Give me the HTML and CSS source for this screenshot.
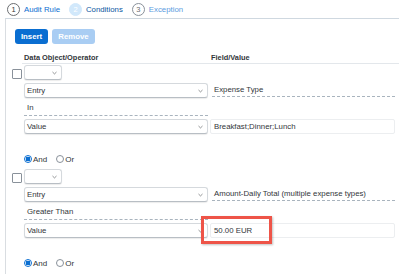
FILE: index.html
```html
<!DOCTYPE html>
<html>
<head>
<meta charset="utf-8">
<link rel="stylesheet" href="styles.css">
</head>
<body>
<div class="tabs">
  <span class="step"><span class="num">1</span><span class="lbl">Audit Rule</span></span>
  <span class="step active"><span class="num">2</span><span class="lbl">Conditions</span></span>
  <span class="step pending"><span class="num">3</span><span class="lbl">Exception</span></span>
</div>
<div class="panel">
  <div class="toolbar">
    <button class="btn primary">Insert</button>
    <button class="btn disabled">Remove</button>
  </div>
  <div class="head">
    <div class="h1">Data Object/Operator</div>
    <div class="h2">Field/Value</div>
  </div>

  <div class="group">
    <span class="check"></span>
    <div class="sel small"><span></span><svg class="chev" viewBox="0 0 6 4"><path d="M0.6 0.8 L3 3.1 L5.4 0.8"/></svg></div>
    <div class="sel c2"><span>Entry</span><svg class="chev" viewBox="0 0 6 4"><path d="M0.6 0.8 L3 3.1 L5.4 0.8"/></svg></div>
    <div class="field c3">Expense Type</div>
    <div class="op c2">In</div>
    <div class="sel c2 val"><span>Value</span><svg class="chev" viewBox="0 0 6 4"><path d="M0.6 0.8 L3 3.1 L5.4 0.8"/></svg></div>
    <div class="input c3">Breakfast;Dinner;Lunch</div>
    <div class="radios c2">
      <span class="radio on"></span><span class="rl">And</span>
      <span class="radio"></span><span class="rl">Or</span>
    </div>
  </div>

  <div class="group">
    <span class="check"></span>
    <div class="sel small"><span></span><svg class="chev" viewBox="0 0 6 4"><path d="M0.6 0.8 L3 3.1 L5.4 0.8"/></svg></div>
    <div class="sel c2"><span>Entry</span><svg class="chev" viewBox="0 0 6 4"><path d="M0.6 0.8 L3 3.1 L5.4 0.8"/></svg></div>
    <div class="field c3">Amount-Daily Total (multiple expense types)</div>
    <div class="op c2">Greater Than</div>
    <div class="sel c2 val"><span>Value</span><svg class="chev" viewBox="0 0 6 4"><path d="M0.6 0.8 L3 3.1 L5.4 0.8"/></svg></div>
    <div class="input c3 marked">50.00 EUR<span class="highlight"></span></div>
    <div class="radios c2">
      <span class="radio on"></span><span class="rl">And</span>
      <span class="radio"></span><span class="rl">Or</span>
    </div>
  </div>
</div>
</body>
</html>
```

FILE: styles.css
```css
html, body {
  margin: 0;
  padding: 0;
  background: #fff;
  overflow: hidden;
}
body {
  font-family: "Liberation Sans", Arial, sans-serif;
  font-size: 7.8px;
  color: #32363a;
  width: 399px;
  height: 274px;
}
.tabs {
  display: flex;
  align-items: center;
  height: 18px;
  padding-left: 7px;
}
.step {
  display: flex;
  align-items: center;
  margin-right: 9px;
  color: #0a6ed1;
}
.num {
  width: 11px;
  height: 11px;
  border: 1px solid #6a6d70;
  border-radius: 50%;
  display: flex;
  align-items: center;
  justify-content: center;
  color: #32363a;
  font-size: 7.5px;
  margin-right: 4px;
}
.active .num {
  background: #d1e8fb;
  border-color: #d1e8fb;
  color: #fff;
}
.active .lbl {
  color: #0854a0;
}
.pending .num {
  border-color: #89919a;
  color: #6a6d70;
}
.pending .lbl {
  color: #5b9be0;
}
.panel {
  margin-left: 5px;
  border-left: 1px solid #d9dde1;
  border-top: 1px solid #cfd8e0;
  height: 260px;
}
.toolbar {
  display: flex;
  gap: 4px;
  padding: 10px 0 0 9px;
}
.btn {
  height: 15px;
  border: none;
  border-radius: 3px;
  font-family: inherit;
  font-size: 7.8px;
  font-weight: bold;
  color: #fff;
  padding: 0;
}
.primary {
  background: #0a6ed1;
  width: 33px;
}
.disabled {
  background: #a9cdf3;
  width: 43px;
}
.head {
  display: grid;
  grid-template-columns: 186px 187px;
  margin: 8px 0 0 16px;
  padding-left: 2px;
  line-height: 11px;
  font-weight: bold;
  font-size: 7.4px;
  border-bottom: 1px solid #e3e7eb;
}
.h2 {
  padding-left: 1px;
}
.group {
  display: grid;
  grid-template-columns: 18px 186px 187px;
  padding-top: 1px;
  align-items: start;
}
.check {
  grid-column: 1;
  width: 8px;
  height: 8px;
  border: 1px solid #89919a;
  border-radius: 1px;
  margin: 4px 0 0 6px;
}
.c2 { grid-column: 2; }
.c3 { grid-column: 3; }
.sel {
  box-sizing: border-box;
  height: 15px;
  width: 184px;
  border: 1px solid #d5d9dd;
  border-bottom-color: #b8bec4;
  border-radius: 3px;
  box-shadow: 0 1px 1px rgba(0,0,0,0.08);
  display: flex;
  align-items: center;
  justify-content: space-between;
  padding: 0 4px 0 2px;
  background: #fff;
}
.sel.small {
  grid-column: 2;
  width: 38px;
}
.chev {
  width: 5px;
  height: 4px;
  fill: none;
  stroke: #6a6d70;
  stroke-width: 0.9;
}
.group > .sel.c2 {
  margin-top: 3px;
}
.group > .sel.val {
  margin-top: 3px;
}
.field {
  margin: 3px 2px 0 2px;
  padding-left: 2px;
  height: 13px;
  line-height: 13px;
  border-bottom: 1px dashed #a9b4be;
  white-space: nowrap;
}
.op {
  width: 184px;
  box-sizing: border-box;
  padding: 4px 0 0 3px;
  line-height: 12px;
  height: 18px;
  border-bottom: 1px dashed #a9b4be;
}
.input {
  box-sizing: border-box;
  margin: 3px 0 0 0;
  height: 15px;
  width: 185px;
  border: 1px solid #eceef0;
  border-radius: 2px;
  padding-left: 3px;
  line-height: 13px;
  position: relative;
}
.highlight {
  position: absolute;
  left: -10px;
  top: -8px;
  width: 71px;
  height: 28px;
  box-sizing: border-box;
  border: 3px solid #ee5448;
  box-shadow: 1px 1px 2px rgba(0,0,0,0.25);
}
.radios {
  display: flex;
  align-items: center;
  margin: 20px 0 4px 0;
  height: 10px;
}
.radio {
  width: 6px;
  height: 6px;
  border: 1px solid #89919a;
  border-radius: 50%;
  margin-right: 1px;
  background: #fff;
}
.radio.on {
  border-color: #0a6ed1;
  background: radial-gradient(circle, #0a6ed1 0 2.2px, #fff 2.6px);
}
.rl {
  margin-right: 9px;
  font-size: 8px;
}
```
